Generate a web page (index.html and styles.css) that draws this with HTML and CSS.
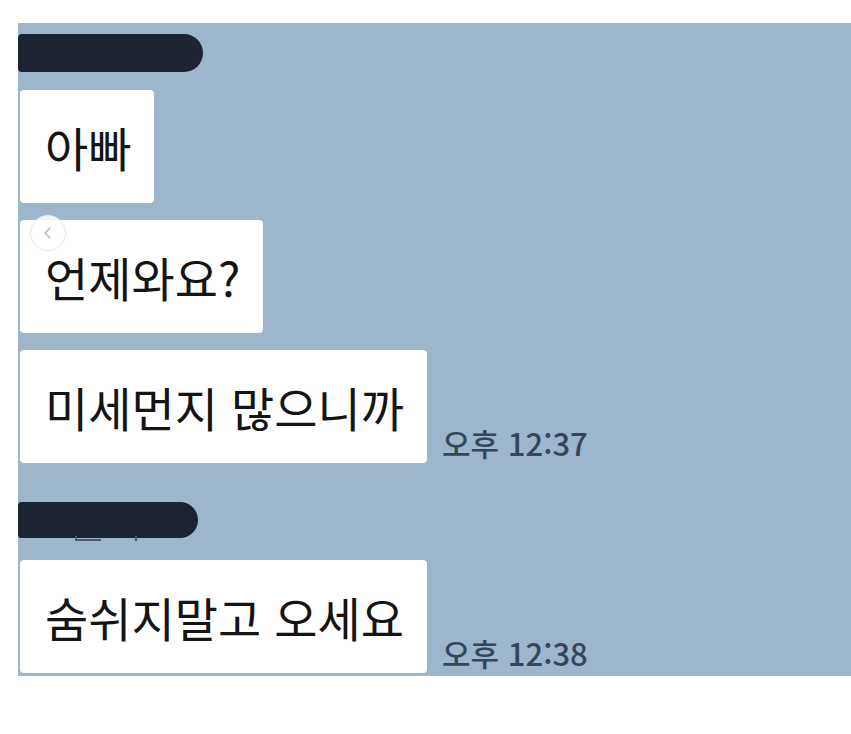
FILE: index.html
```html
<!DOCTYPE html>
<html lang="ko">
<head>
  <meta charset="UTF-8" />
  <meta name="viewport" content="width=device-width, initial-scale=1.0"/>
  <title>채팅</title>
  <link rel="stylesheet" href="styles.css">
</head>
<body>
  <!-- Chat room capture -->
  <div class="chat-panel">
    <div class="name-bar"></div>

    <div class="msg-row">
      <div class="bubble">아빠</div>
    </div>

    <div class="msg-row">
      <div class="bubble">언제와요?</div>
      <span class="carousel-arrow">
        <svg width="14" height="14" viewBox="0 0 14 14">
          <path d="M9 2 L4 7 L9 12" fill="none" stroke="#b9bfc7" stroke-width="1.6" stroke-linecap="round" stroke-linejoin="round"/>
        </svg>
      </span>
    </div>

    <div class="msg-row">
      <div class="bubble">미세먼지 많으니까</div>
      <span class="msg-time">오후 12:37</span>
    </div>

    <div class="name-bar second">
      <span class="name-peek"></span>
    </div>

    <div class="msg-row">
      <div class="bubble">숨쉬지말고 오세요</div>
      <span class="msg-time">오후 12:38</span>
    </div>
  </div>
</body>
</html>
```

FILE: styles.css
```css
body {
  margin: 0;
  padding: 0;
  background-color: #ffffff;
  font-family: "Noto Sans CJK KR", "Noto Sans", sans-serif;
  color: #141414;
}

/* Chat panel */
.chat-panel {
  margin: 23px 0 0 18px;
  height: 653px;
  background-color: #9db6cb;
  display: flex;
  flex-direction: column;
  align-items: flex-start;
  box-sizing: border-box;
  padding-top: 11px;
  overflow: hidden;
}

.chat-panel > * {
  flex-shrink: 0;
}

.name-bar {
  position: relative;
  width: 185px;
  height: 38px;
  background-color: #1c2331;
  border-radius: 4px 20px 20px 4px;
  margin-bottom: 18px;
}

.name-bar.second {
  width: 180px;
  height: 36px;
  margin-top: 22px;
  margin-bottom: 22px;
}

/* bits of the hidden name showing under the marker */
.name-peek {
  position: absolute;
  left: 57px;
  top: 34px;
  width: 24px;
  height: 3px;
  border-left: 2px solid #4f5a66;
  border-bottom: 2px solid #4f5a66;
}

.name-peek::after {
  content: "";
  position: absolute;
  left: 58px;
  top: 0;
  width: 2px;
  height: 5px;
  background-color: #4f5a66;
}

.msg-row {
  position: relative;
  display: flex;
  align-items: flex-end;
  gap: 15px;
  margin-bottom: 17px;
  padding-left: 2px;
}

.bubble {
  background-color: #ffffff;
  border-radius: 4px;
  height: 113px;
  box-sizing: border-box;
  padding: 0 23px 0 25px;
  display: flex;
  align-items: center;
  font-size: 47px;
  font-weight: 400;
  line-height: 1;
  white-space: nowrap;
}

.msg-time {
  font-size: 31px;
  font-weight: 500;
  color: #36465a;
  line-height: 1;
  padding-bottom: 5px;
  white-space: nowrap;
}

/* Instagram style carousel arrow on top of the capture */
.carousel-arrow {
  position: absolute;
  left: 12px;
  top: -5px;
  width: 34px;
  height: 34px;
  border-radius: 50%;
  border: 1px solid #e6e9ec;
  background-color: rgba(255, 255, 255, 0.85);
  display: flex;
  align-items: center;
  justify-content: center;
}
```
